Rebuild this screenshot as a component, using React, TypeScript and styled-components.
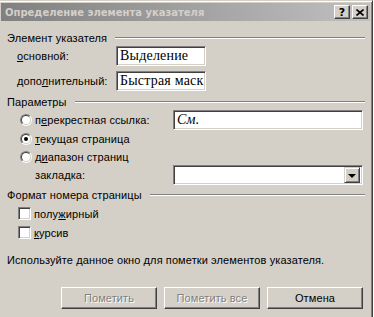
import React from "react";
import styled, { createGlobalStyle } from "styled-components";

const GlobalStyle = createGlobalStyle`
  html, body {
    margin: 0;
    padding: 0;
    background: #ffffff;
    overflow: hidden;
  }
  body {
    font-family: "Liberation Sans", Arial, sans-serif;
    font-size: 11px;
    letter-spacing: 0.1px;
    color: #000;
  }
`;

const Window = styled.div`
  box-sizing: border-box;
  width: 375px;
  height: 340px;
  margin-left: -2px;
  padding: 2px;
  border: 1px solid;
  border-color: #d4d0c8 #404040 #404040 #d4d0c8;
  box-shadow: inset 1px 1px #ffffff, inset -1px -1px #808080;
  background: #d4d0c8;
`;

const TitleBar = styled.div`
  display: flex;
  align-items: center;
  height: 18px;
  padding: 0 2px 0 4px;
  background: linear-gradient(to right, #808080, #c0c0c0);
  color: #d4d0c8;
  font-family: "DejaVu Sans", Tahoma, sans-serif;
  font-weight: bold;
  font-size: 10px;
  letter-spacing: 0;
`;

const TitleText = styled.div`
  flex: 1;
  white-space: nowrap;
`;

const TitleButton = styled.div<{ $gap?: boolean }>`
  box-sizing: border-box;
  width: 16px;
  height: 14px;
  margin-left: ${(p) => (p.$gap ? "2px" : "0")};
  display: flex;
  align-items: center;
  justify-content: center;
  background: #d4d0c8;
  border: 1px solid;
  border-color: #ffffff #404040 #404040 #ffffff;
  box-shadow: inset -1px -1px #808080;
  color: #000;
  font-family: "DejaVu Sans", sans-serif;
  font-size: 11px;
  font-weight: bold;
  line-height: 1;
`;

const Content = styled.div`
  display: flex;
  flex-direction: column;
  padding: 10px 5px 12px 6px;
`;

const GroupHeader = styled.div<{ $top: number }>`
  display: flex;
  align-items: center;
  height: 14px;
  margin-top: ${(p) => p.$top}px;
  white-space: nowrap;
`;

const Etch = styled.div`
  flex: 1;
  margin-left: 8px;
  border-top: 1px solid #808080;
  border-bottom: 1px solid #ffffff;
`;

const Row = styled.div<{ $top?: number; $h: number; $indent: number }>`
  display: flex;
  align-items: center;
  height: ${(p) => p.$h}px;
  margin-top: ${(p) => p.$top ?? 0}px;
  margin-right: 2px;
  padding-left: ${(p) => p.$indent}px;
  white-space: nowrap;
`;

const Label = styled.div<{ $w: number }>`
  width: ${(p) => p.$w}px;
  flex: none;
  display: flex;
  align-items: center;
  gap: 3px;
`;

const U = styled.span`
  text-decoration: underline;
`;

const Field = styled.div<{ $w?: number; $italic?: boolean }>`
  box-sizing: border-box;
  ${(p) => (p.$w ? `width: ${p.$w}px;` : "flex: 1;")}
  height: 20px;
  display: flex;
  align-items: center;
  padding-left: 3px;
  overflow: hidden;
  background: #ffffff;
  border: 1px solid;
  border-color: #808080 #ffffff #ffffff #808080;
  box-shadow: inset 1px 1px #404040, inset -1px -1px #d4d0c8;
  font-family: "Liberation Serif", "Times New Roman", serif;
  font-size: 14px;
  letter-spacing: 0.2px;
  font-style: ${(p) => (p.$italic ? "italic" : "normal")};
  white-space: nowrap;
`;

const Select = styled(Field)`
  justify-content: flex-end;
  padding: 2px;
`;

const DropButton = styled.div`
  box-sizing: border-box;
  width: 16px;
  height: 16px;
  display: flex;
  align-items: center;
  justify-content: center;
  background: #d4d0c8;
  border: 1px solid;
  border-color: #d4d0c8 #404040 #404040 #d4d0c8;
  box-shadow: inset 1px 1px #ffffff, inset -1px -1px #808080;
`;

const Arrow = styled.div`
  width: 0;
  height: 0;
  border-left: 4px solid transparent;
  border-right: 4px solid transparent;
  border-top: 4px solid #000;
  margin-top: 1px;
`;

const RadioOuter = styled.span`
  box-sizing: border-box;
  width: 12px;
  height: 12px;
  flex: none;
  border-radius: 50%;
  border: 1px solid;
  border-color: #808080 #ffffff #ffffff #808080;
  display: flex;
`;

const RadioInner = styled.span`
  box-sizing: border-box;
  flex: 1;
  border-radius: 50%;
  border: 1px solid;
  border-color: #404040 #d4d0c8 #d4d0c8 #404040;
  background: #ffffff;
  display: flex;
  align-items: center;
  justify-content: center;
`;

const Dot = styled.span`
  width: 4px;
  height: 4px;
  border-radius: 50%;
  background: #000;
`;

const Check = styled.span`
  box-sizing: border-box;
  width: 13px;
  height: 13px;
  flex: none;
  background: #ffffff;
  border: 1px solid;
  border-color: #808080 #ffffff #ffffff #808080;
  box-shadow: inset 1px 1px #404040, inset -1px -1px #d4d0c8;
`;

const Info = styled.div`
  height: 14px;
  margin-top: 11px;
  display: flex;
  align-items: center;
  white-space: nowrap;
`;

const ButtonRow = styled.div`
  display: flex;
  justify-content: flex-end;
  gap: 7px;
  margin-top: 20px;
  margin-right: 2px;
`;

const Button = styled.div<{ $disabled?: boolean }>`
  box-sizing: border-box;
  width: 96px;
  height: 22px;
  display: flex;
  align-items: center;
  justify-content: center;
  background: #d4d0c8;
  border: 1px solid;
  border-color: #ffffff #404040 #404040 #ffffff;
  box-shadow: inset -1px -1px #808080;
  color: ${(p) => (p.$disabled ? "#808080" : "#000")};
  text-shadow: ${(p) => (p.$disabled ? "1px 1px 0 #ffffff" : "none")};
`;

const Radio = ({ on }: { on?: boolean }) => (
  <RadioOuter>
    <RadioInner>{on && <Dot />}</RadioInner>
  </RadioOuter>
);

export default function App() {
  return (
    <>
      <GlobalStyle />
      <Window>
        <TitleBar>
          <TitleText>Определение элемента указателя</TitleText>
          <TitleButton>?</TitleButton>
          <TitleButton $gap>
            <svg width="8" height="7" viewBox="0 0 8 7">
              <path d="M0.5 0.5 L7.5 6.5 M7.5 0.5 L0.5 6.5" stroke="#000" strokeWidth="1.6" />
            </svg>
          </TitleButton>
        </TitleBar>
        <Content>
          <GroupHeader $top={0}>
            Элемент указателя
            <Etch />
          </GroupHeader>
          <Row $top={1} $h={20} $indent={10}>
            <Label $w={99}>
              <span>
                <U>о</U>сновной:
              </span>
            </Label>
            <Field $w={90}>Выделение</Field>
          </Row>
          <Row $top={5} $h={20} $indent={10}>
            <Label $w={99}>
              <span>
                допо<U>л</U>нительный:
              </span>
            </Label>
            <Field $w={90}>Быстрая маск</Field>
          </Row>

          <GroupHeader $top={4}>
            Параметры
            <Etch />
          </GroupHeader>
          <Row $top={1} $h={20} $indent={13}>
            <Label $w={153}>
              <Radio />
              <span>
                п<U>е</U>рекрестная ссылка:
              </span>
            </Label>
            <Field $italic>См.</Field>
          </Row>
          <Row $h={18} $indent={13}>
            <Label $w={153}>
              <Radio on />
              <span>
                <U>т</U>екущая страница
              </span>
            </Label>
          </Row>
          <Row $h={17} $indent={13}>
            <Label $w={153}>
              <Radio />
              <span>
                д<U>и</U>апазон страниц
              </span>
            </Label>
          </Row>
          <Row $h={20} $indent={28}>
            <Label $w={138}>закладка:</Label>
            <Select>
              <DropButton>
                <Arrow />
              </DropButton>
            </Select>
          </Row>

          <GroupHeader $top={3}>
            Формат номера страницы
            <Etch />
          </GroupHeader>
          <Row $top={2} $h={19} $indent={11}>
            <Label $w={120}>
              <Check />
              <span>
                полу<U>ж</U>ирный
              </span>
            </Label>
          </Row>
          <Row $h={19} $indent={11}>
            <Label $w={120}>
              <Check />
              <span>
                <U>к</U>урсив
              </span>
            </Label>
          </Row>

          <Info>Используйте данное окно для пометки элементов указателя.</Info>

          <ButtonRow>
            <Button $disabled>Пометить</Button>
            <Button $disabled>Пометить все</Button>
            <Button>Отмена</Button>
          </ButtonRow>
        </Content>
      </Window>
    </>
  );
}
